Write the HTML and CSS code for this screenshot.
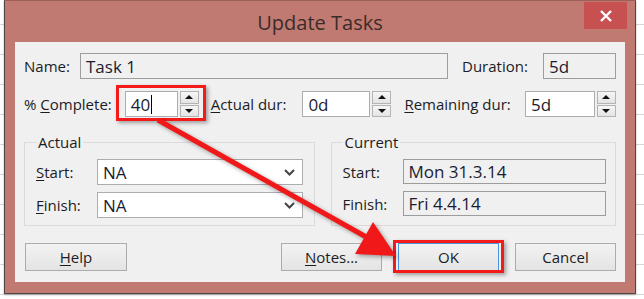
FILE: index.html
```html
<html>
<head>
<link rel="stylesheet" href="styles.css">
</head>
<body>
<div class="window">
    <div class="titlebar">
        <span class="title">Update Tasks</span>
        <span class="close">
            <svg width="14" height="14" viewBox="0 0 14 14"><path d="M2 2 L12 12 M12 2 L2 12" stroke="#fff" stroke-width="2.4"/></svg>
        </span>
    </div>
    <div class="client">
        <div class="row">
            <span class="lbl lbl-name">Name:</span>
            <div class="field ro name">Task 1</div>
            <span class="lbl lbl-duration">Duration:</span>
            <div class="field ro duration">5d</div>
        </div>
        <div class="row row-spins">
            <span class="lbl lbl-pct">% <u>C</u>omplete:</span>
            <div class="spin marked marked-pct">
                <div class="field pct">40<span class="caret"></span></div>
                <div class="arrows"><span class="up"></span><span class="down"></span></div>
            </div>
            <span class="lbl lbl-actdur"><u>A</u>ctual dur:</span>
            <div class="spin">
                <div class="field actdur">0d</div>
                <div class="arrows"><span class="up"></span><span class="down"></span></div>
            </div>
            <span class="lbl lbl-remdur"><u>R</u>emaining dur:</span>
            <div class="spin">
                <div class="field remdur">5d</div>
                <div class="arrows"><span class="up"></span><span class="down"></span></div>
            </div>
        </div>
        <div class="groups">
            <fieldset class="group group-actual">
                <legend>Actual</legend>
                <div class="grow">
                    <span class="lbl glbl"><u>S</u>tart:</span>
                    <div class="field combo">NA<svg class="chev" width="11" height="7" viewBox="0 0 11 7"><path d="M1 1 L5.5 5.5 L10 1" fill="none" stroke="#444" stroke-width="2"/></svg></div>
                </div>
                <div class="grow">
                    <span class="lbl glbl"><u>F</u>inish:</span>
                    <div class="field combo">NA<svg class="chev" width="11" height="7" viewBox="0 0 11 7"><path d="M1 1 L5.5 5.5 L10 1" fill="none" stroke="#444" stroke-width="2"/></svg></div>
                </div>
            </fieldset>
            <fieldset class="group group-current">
                <legend>Current</legend>
                <div class="grow">
                    <span class="lbl glbl">Start:</span>
                    <div class="field ro cur">Mon 31.3.14</div>
                </div>
                <div class="grow">
                    <span class="lbl glbl">Finish:</span>
                    <div class="field ro cur">Fri 4.4.14</div>
                </div>
            </fieldset>
        </div>
        <div class="buttons">
            <button class="btn btn-help"><u>H</u>elp</button>
            <div class="btn-group">
                <button class="btn"><u>N</u>otes...</button>
                <button class="btn btn-ok marked marked-ok">OK</button>
                <button class="btn">Cancel</button>
            </div>
        </div>
    </div>
</div>
<svg class="arrow" width="644" height="299" viewBox="0 0 644 299">
    <line x1="158" y1="120" x2="368" y2="238" stroke="#f01818" stroke-width="5"/>
    <polygon points="396,256 355,254 373,222" fill="#f01818"/>
</svg>
</body>
</html>
```

FILE: styles.css
```css
html, body {
    margin: 0;
    padding: 0;
}

body {
    width: 644px;
    height: 299px;
    overflow: hidden;
    position: relative;
    background: repeating-linear-gradient(to bottom, #fff 0, #fff 24px, #d6d6d6 24px, #d6d6d6 25px, #fff 25px, #fff 30px);
    font-family: "Open Sans", "Noto Sans", sans-serif;
    color: #1c1c24;
}

.window {
    margin-left: 4px;
    width: 630px;
    border: 1px solid #4e4644;
    border-top-color: #9c6058;
    background: #c17a71;
    display: flex;
    flex-direction: column;
    box-shadow: 0 1px 2px rgba(0,0,0,.3);
}

.titlebar {
    height: 41px;
    display: grid;
    grid-template-columns: 1fr auto 1fr;
    align-items: center;
}

.title {
    grid-column: 2;
    font-size: 20px;
    color: #3a2c2a;
    padding-top: 1px;
}

.close {
    grid-column: 3;
    justify-self: end;
    align-self: start;
    margin-top: 1px;
    margin-right: 8px;
    width: 43px;
    height: 27px;
    background: #c75050;
    display: flex;
    align-items: center;
    justify-content: center;
}

.client {
    margin: 0 10px 11px 10px;
    background: #f0f0f0;
    padding: 11px 9px 11px 9px;
    display: flex;
    flex-direction: column;
}

.row {
    display: flex;
    align-items: center;
    height: 26px;
}

.row-spins {
    margin-top: 12px;
}

.lbl {
    font-size: 15px;
    white-space: nowrap;
}

u {
    text-decoration-thickness: 1px;
    text-underline-offset: 2px;
}

.lbl-name { width: 56px; }
.lbl-duration { width: 81px; margin-left: 14px; }
.lbl-pct { width: 101px; }
.lbl-actdur { width: 92px; margin-left: 12px; }
.lbl-remdur { width: 121px; margin-left: 13px; }

.field {
    box-sizing: border-box;
    height: 26px;
    border: 1px solid #abadb3;
    background: #fff;
    font-size: 17px;
    padding-left: 5px;
    display: flex;
    align-items: center;
    color: #1c1c30;
}

.field.ro {
    background: #f0f0f0;
    border-color: #9c9c9c;
}

.name { width: 368px; }
.duration { width: 73px; }
.pct { width: 53px; }
.actdur { width: 68px; }
.remdur { width: 70px; }

.caret {
    width: 1px;
    height: 19px;
    background: #000;
    margin-left: 1px;
}

.spin {
    display: flex;
    gap: 2px;
}

.arrows {
    display: flex;
    flex-direction: column;
    gap: 1px;
    width: 19px;
    height: 26px;
}

.arrows span {
    flex: 1;
    box-sizing: border-box;
    border: 1px solid #b4b4b4;
    background: linear-gradient(#f6f6f6, #e4e4e4);
    display: flex;
    align-items: center;
    justify-content: center;
}

.arrows .up::before {
    content: '';
    border-left: 4px solid transparent;
    border-right: 4px solid transparent;
    border-bottom: 4px solid #111;
}

.arrows .down::before {
    content: '';
    border-left: 4px solid transparent;
    border-right: 4px solid transparent;
    border-top: 4px solid #111;
}

.marked {
    position: relative;
}

.marked::after {
    content: '';
    position: absolute;
    border: 3px solid #f51a1a;
    box-shadow: 2px 2px 4px rgba(0,0,0,.35);
    pointer-events: none;
}

.marked-pct::after {
    left: -9px;
    right: -7px;
    top: -6px;
    bottom: -4px;
}

.marked-ok::after {
    left: -6px;
    right: -6px;
    top: -4px;
    bottom: -3px;
}

.groups {
    display: flex;
    gap: 16px;
    margin-top: 16px;
}

.group {
    margin: 0;
    border: 1px solid #dadada;
    padding: 8px 9px 7px 11px;
    display: flex;
    flex-direction: column;
    gap: 7px;
}

.group legend {
    font-size: 15px;
    line-height: 18px;
    padding: 0 2px;
}

.group-actual { width: 269px; }
.group-current { width: 264px; }

.grow {
    display: flex;
    align-items: center;
}

.glbl { width: 61px; }

.group-current .glbl { width: 60px; }

.combo {
    width: 206px;
    justify-content: space-between;
    padding-right: 7px;
}

.group-current .grow .field { height: 25px; }

.cur { width: 203px; }

.buttons {
    margin-top: 17px;
    display: flex;
    justify-content: space-between;
}

.btn-group {
    display: flex;
    gap: 16px;
}

.btn {
    box-sizing: border-box;
    width: 101px;
    height: 28px;
    border: 1px solid #acacac;
    background: linear-gradient(#f2f2f2, #e4e4e4);
    font-family: "Open Sans", "Noto Sans", sans-serif;
    font-size: 15px;
    color: #1c1c24;
    padding: 0;
}

.btn-help {
    width: 102px;
    margin-left: 1px;
}

.btn-ok {
    border-color: #4a92dc;
}

.arrow {
    position: absolute;
    left: 0;
    top: 0;
    pointer-events: none;
    filter: drop-shadow(2px 2px 2px rgba(0,0,0,.35));
}
```
